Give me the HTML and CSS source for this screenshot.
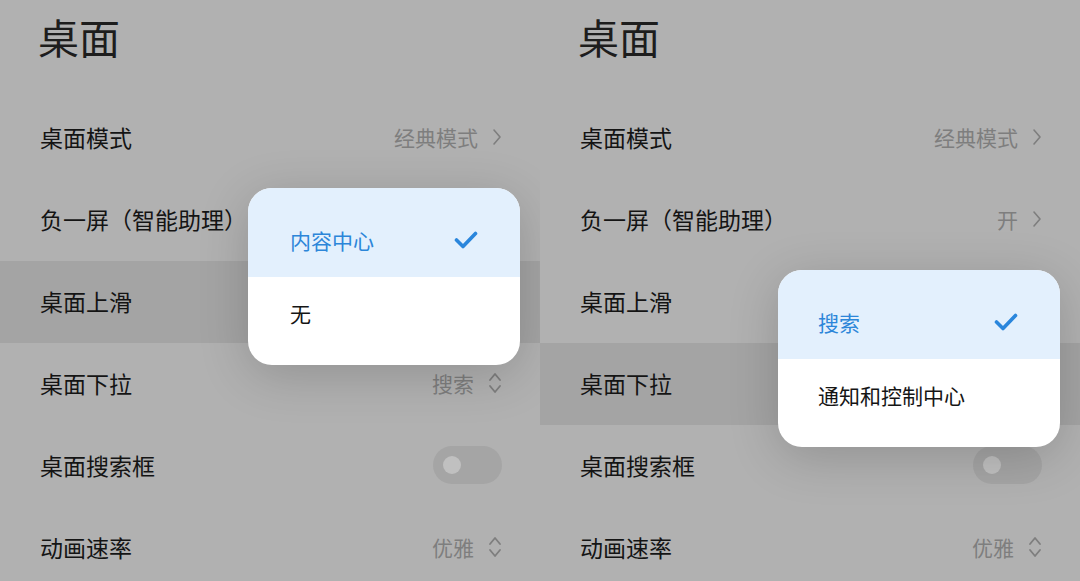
FILE: index.html
```html
<!DOCTYPE html>
<html>
<head>
    <title>桌面</title>
    <link rel="stylesheet" href="styles.css">
</head>
<body>
    <div class="screens">
        <!-- left: 桌面上滑 picker -->
        <div class="panel">
            <h1 class="title">桌面</h1>
            <div class="row">
                <span class="label">桌面模式</span>
                <span class="value">经典模式 <svg class="chev" viewBox="0 0 10 18"><path d="M2 2l6 7-6 7"/></svg></span>
            </div>
            <div class="row">
                <span class="label">负一屏（智能助理）</span>
                <span class="value">开 <svg class="chev" viewBox="0 0 10 18"><path d="M2 2l6 7-6 7"/></svg></span>
            </div>
            <div class="row active">
                <span class="label">桌面上滑</span>
                <span class="value">内容中心 <svg class="updown" viewBox="0 0 14 24"><path d="M2 9l5-6 5 6M2 15l5 6 5-6"/></svg></span>
            </div>
            <div class="row">
                <span class="label">桌面下拉</span>
                <span class="value">搜索 <svg class="updown" viewBox="0 0 14 24"><path d="M2 9l5-6 5 6M2 15l5 6 5-6"/></svg></span>
            </div>
            <div class="row">
                <span class="label">桌面搜索框</span>
                <span class="toggle"><span class="knob"></span></span>
            </div>
            <div class="row">
                <span class="label">动画速率</span>
                <span class="value">优雅 <svg class="updown" viewBox="0 0 14 24"><path d="M2 9l5-6 5 6M2 15l5 6 5-6"/></svg></span>
            </div>

            <div class="popup popup-left">
                <div class="option selected">
                    <span>内容中心</span>
                    <svg class="check" viewBox="0 0 24 18"><path d="M2.5 9l6.5 6.5 12.5-13"/></svg>
                </div>
                <div class="option">
                    <span>无</span>
                </div>
            </div>
        </div>

        <!-- right: 桌面下拉 picker -->
        <div class="panel">
            <h1 class="title">桌面</h1>
            <div class="row">
                <span class="label">桌面模式</span>
                <span class="value">经典模式 <svg class="chev" viewBox="0 0 10 18"><path d="M2 2l6 7-6 7"/></svg></span>
            </div>
            <div class="row">
                <span class="label">负一屏（智能助理）</span>
                <span class="value">开 <svg class="chev" viewBox="0 0 10 18"><path d="M2 2l6 7-6 7"/></svg></span>
            </div>
            <div class="row">
                <span class="label">桌面上滑</span>
                <span class="value">内容中心 <svg class="updown" viewBox="0 0 14 24"><path d="M2 9l5-6 5 6M2 15l5 6 5-6"/></svg></span>
            </div>
            <div class="row active">
                <span class="label">桌面下拉</span>
                <span class="value">搜索 <svg class="updown" viewBox="0 0 14 24"><path d="M2 9l5-6 5 6M2 15l5 6 5-6"/></svg></span>
            </div>
            <div class="row">
                <span class="label">桌面搜索框</span>
                <span class="toggle"><span class="knob"></span></span>
            </div>
            <div class="row">
                <span class="label">动画速率</span>
                <span class="value">优雅 <svg class="updown" viewBox="0 0 14 24"><path d="M2 9l5-6 5 6M2 15l5 6 5-6"/></svg></span>
            </div>

            <div class="popup popup-right">
                <div class="option selected">
                    <span>搜索</span>
                    <svg class="check" viewBox="0 0 24 18"><path d="M2.5 9l6.5 6.5 12.5-13"/></svg>
                </div>
                <div class="option">
                    <span>通知和控制中心</span>
                </div>
            </div>
        </div>
    </div>
</body>
</html>
```

FILE: styles.css
```css
body {
    margin: 0;
    padding: 0;
    background-color: #b1b1b1;
    font-family: "Noto Sans CJK SC", "Noto Sans", sans-serif;
    overflow: hidden;
}

.screens {
    display: grid;
    grid-template-columns: 540px 540px;
    height: 581px;
}

.panel {
    position: relative;
    background-color: #b1b1b1;
    overflow: hidden;
}

.title {
    margin: 0;
    height: 97px;
    padding-left: 38px;
    line-height: 72px;
    font-size: 41px;
    font-weight: 400;
    color: #1d1d1d;
}

.row {
    height: 82px;
    padding: 0 38px 3px 40px;
    box-sizing: border-box;
    display: flex;
    align-items: center;
    justify-content: space-between;
}

.row.active {
    background-color: #a4a4a4;
}

.label {
    font-size: 23px;
    color: #141414;
}

.value {
    display: flex;
    align-items: center;
    gap: 14px;
    font-size: 21px;
    color: #7e7e7e;
}

.chev {
    width: 10px;
    height: 18px;
    fill: none;
    stroke: #7e7e7e;
    stroke-width: 1.6;
    stroke-linecap: round;
    stroke-linejoin: round;
}

.updown {
    width: 14px;
    height: 24px;
    fill: none;
    stroke: #7e7e7e;
    stroke-width: 1.8;
    stroke-linecap: round;
    stroke-linejoin: round;
}

.toggle {
    width: 69px;
    height: 38px;
    border-radius: 19px;
    background-color: #a5a5a5;
    display: flex;
    align-items: center;
    padding-left: 10px;
    box-sizing: border-box;
}

.knob {
    width: 18px;
    height: 18px;
    border-radius: 50%;
    background-color: #c0c0c0;
}

.popup {
    position: absolute;
    background-color: #ffffff;
    border-radius: 24px;
    overflow: hidden;
    box-shadow: 0 10px 50px rgba(0, 0, 0, 0.18);
}

.popup-left {
    left: 248px;
    top: 188px;
    width: 272px;
}

.popup-right {
    left: 238px;
    top: 270px;
    width: 282px;
}

.option {
    height: 88px;
    padding: 0 42px 16px;
    box-sizing: border-box;
    display: flex;
    align-items: center;
    justify-content: space-between;
    font-size: 21px;
    color: #151515;
}

.popup-right .option {
    padding-left: 40px;
}

.option.selected {
    height: 89px;
    padding-top: 14px;
    padding-bottom: 0;
    background-color: #e3f0fd;
    color: #2c86d9;
}

.check {
    width: 24px;
    height: 18px;
    fill: none;
    stroke: #2a86dc;
    stroke-width: 3.6;
    stroke-linecap: round;
    stroke-linejoin: round;
}
```
